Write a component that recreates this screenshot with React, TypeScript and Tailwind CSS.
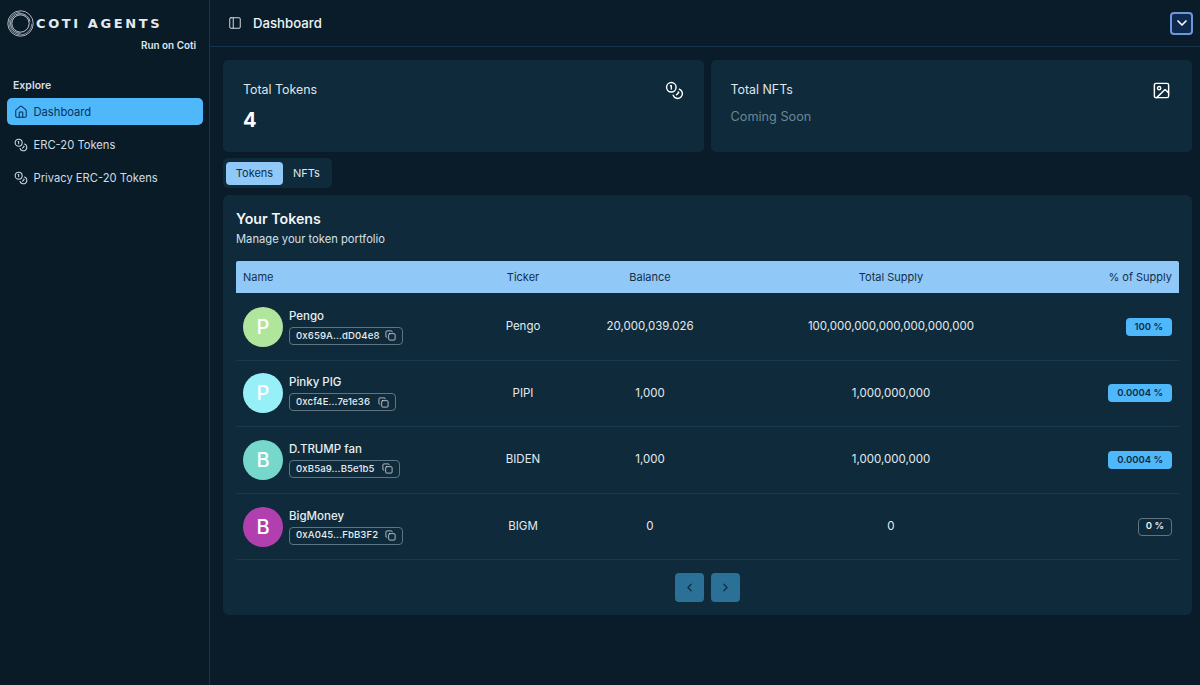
import { Coins, House, PanelLeft, Image as ImageIcon, ChevronDown, ChevronLeft, ChevronRight, Copy } from "lucide-react";

const tokens = [
  { letter: "P", color: "bg-[#b0e59c]", name: "Pengo", addr: "0x659A...dD04e8", w: "w-[114px]", ticker: "Pengo", balance: "20,000,039.026", supply: "100,000,000,000,000,000,000", pct: "100 %", filled: true },
  { letter: "P", color: "bg-[#97f0f8]", name: "Pinky PIG", addr: "0xcf4E...7e1e36", w: "w-[107px]", ticker: "PIPI", balance: "1,000", supply: "1,000,000,000", pct: "0.0004 %", filled: true },
  { letter: "B", color: "bg-[#75d8cb]", name: "D.TRUMP fan", addr: "0xB5a9...B5e1b5", w: "w-[111px]", ticker: "BIDEN", balance: "1,000", supply: "1,000,000,000", pct: "0.0004 %", filled: true },
  { letter: "B", color: "bg-[#b23fae]", name: "BigMoney", addr: "0xA045...FbB3F2", w: "w-[114px]", ticker: "BIGM", balance: "0", supply: "0", pct: "0 %", filled: false },
];

const cols = "grid grid-cols-[241px_92px_162px_320px_128px] items-center";

function NavItem({ label, active, icon }: { label: string; active?: boolean; icon: React.ReactNode }) {
  return (
    <div className={`flex h-[27px] items-center gap-[6px] rounded-[5px] pl-[6.5px] pt-[1px] text-[11.2px] ${active ? "bg-[#4fb8fa] text-[#07335a]" : "text-[#cfdbe3]"}`}>
      {icon}
      <span>{label}</span>
    </div>
  );
}

function Logo() {
  return (
    <svg width="27" height="27" viewBox="0 0 28 28" fill="none" stroke="#d8e0e6" className="shrink-0">
      <circle cx="14" cy="14" r="13.2" strokeWidth="0.8" />
      <path d="M14 2.2a11.8 11.8 0 1 0 11.8 11.8" strokeWidth="0.6" />
      <path d="M24 12A10.3 10.3 0 1 0 14 24.3" strokeWidth="0.8" />
      <circle cx="14" cy="14" r="9" strokeWidth="0.9" />
    </svg>
  );
}

export default function App() {
  return (
    <div className="flex h-[685px] w-[1200px] overflow-hidden bg-[#0a1c29] font-['Inter',sans-serif] text-[#e6edf2]">
      <aside className="flex w-[210px] shrink-0 flex-col border-r border-[#17344a] bg-[#0a1b28] pl-[7px] pr-[6px]">
        <div className="flex h-[40px] items-center pt-[6px]">
          <Logo />
          <span className="ml-[2px] whitespace-nowrap font-['DejaVu_Sans',sans-serif] text-[13px] font-bold leading-none tracking-[2.6px] text-[#e4eaee]">COTI AGENTS</span>
        </div>
        <div className="mt-[-1px] pr-[7px] text-right text-[9.9px] font-semibold leading-[12px] text-[#dfe7ec]">Run on Coti</div>
        <div className="mt-[28px] pl-[6px] text-[10.5px] font-semibold leading-[14px] text-[#d5dfe6]">Explore</div>
        <div className="mt-[5px] flex flex-col gap-[6px]">
          <NavItem active label="Dashboard" icon={<House size={14} strokeWidth={1.8} />} />
          <NavItem label="ERC-20 Tokens" icon={<Coins size={14} strokeWidth={1.8} />} />
          <NavItem label="Privacy ERC-20 Tokens" icon={<Coins size={14} strokeWidth={1.8} />} />
        </div>
      </aside>

      <main className="flex min-w-0 flex-1 flex-col">
        <header className="flex h-[47px] shrink-0 items-center border-b border-[#17344a] pl-[18px] pr-[7px]">
          <PanelLeft size={14} strokeWidth={1.6} className="text-[#dfe7ec]" />
          <span className="ml-[11px] pt-[2px] text-[13.2px] font-medium text-[#eef3f6]">Dashboard</span>
          <button className="ml-auto flex h-[23px] w-[23px] items-center justify-center rounded-[4px] border-2 border-[#6f97d8] bg-[#0e2850] text-white">
            <ChevronDown size={16} strokeWidth={2.5} />
          </button>
        </header>

        <div className="flex flex-col pl-[13px] pr-[8px] pt-[13px]">
          <div className="flex gap-[7px]">
            <section className="flex h-[92px] w-[481px] items-start justify-between rounded-[5px] bg-[#0f2a3a] pl-[20px] pr-[20px] pt-[21px]">
              <div>
                <div className="text-[12.4px] leading-[18px] text-[#dfe7ec]">Total Tokens</div>
                <div className="mt-[8px] text-[20px] font-bold leading-[26px] text-white">4</div>
              </div>
              <Coins size={19} strokeWidth={1.8} className="text-white" />
            </section>
            <section className="flex h-[92px] flex-1 items-start justify-between rounded-[5px] bg-[#0f2a3a] pl-[19.5px] pr-[21px] pt-[21px]">
              <div>
                <div className="text-[12.4px] leading-[18px] text-[#dfe7ec]">Total NFTs</div>
                <div className="mt-[9px] text-[12.7px] leading-[18px] text-[#6d8594]">Coming Soon</div>
              </div>
              <ImageIcon size={19} strokeWidth={1.8} className="text-white" />
            </section>
          </div>

          <div className="mt-[6px] flex h-[30px] w-[109px] items-center gap-[1px] rounded-[5px] bg-[#0f2a3a] px-[3px]">
            <div className="flex h-[23px] w-[57px] items-center justify-center rounded-[4px] bg-[#90c8f8] pt-[1px] text-[11px] text-[#0f2f47]">Tokens</div>
            <div className="flex h-[23px] w-[45px] items-center justify-center pt-[1px] text-[11px] text-[#dfe7ec]">NFTs</div>
          </div>

          <section className="mt-[7px] h-[420px] rounded-[6px] bg-[#0f2a3a] px-[13px] pt-[15px]">
            <h2 className="text-[14.2px] font-semibold leading-[18px] text-[#f1f5f7]">Your Tokens</h2>
            <p className="mt-[4px] text-[11.2px] leading-[15px] text-[#d5e0e7]">Manage your token portfolio</p>

            <div className="mt-[14px] border-b border-[#0f2a3a]">
              <div className={`${cols} h-[32px] rounded-t-[2px] bg-[#90c8f8] text-[11px] text-[#143049]`}>
                <div className="pl-[7px]">Name</div>
                <div className="text-center">Ticker</div>
                <div className="text-center">Balance</div>
                <div className="text-center">Total Supply</div>
                <div className="pr-[7px] text-right">% of Supply</div>
              </div>
            </div>

            {tokens.map((t) => (
              <div key={t.addr} className={`${cols} h-[66.6px] border-b border-[#183a50] text-[11.5px] text-[#e3eaef]`}>
                <div className="flex items-center pl-[7px]">
                  <div className={`flex h-[40px] w-[40px] shrink-0 items-center justify-center rounded-full text-[20px] font-medium text-white ${t.color}`}>{t.letter}</div>
                  <div className="ml-[6px]">
                    <div className="text-[11.5px] font-medium leading-[14px] text-[#e8eef2]">{t.name}</div>
                    <div className={`mt-[4px] flex h-[18px] items-center justify-between rounded-[4px] border border-[#5c7686] pl-[6px] pr-[6px] text-[9.6px] font-medium tracking-[0.1px] text-[#e6edf2] ${t.w}`}>
                      <span>{t.addr}</span>
                      <Copy size={11} strokeWidth={1.6} />
                    </div>
                  </div>
                </div>
                <div className="text-center">{t.ticker}</div>
                <div className="text-center">{t.balance}</div>
                <div className="text-center">{t.supply}</div>
                <div className="flex justify-end pr-[7px]">
                  <span className={`flex h-[18px] items-center rounded-[4px] text-[9.5px] font-semibold ${t.filled ? "bg-[#4fb8fa] px-[9px] text-[#0c2c45]" : "border border-[#5c7686] px-[7px] text-[#e6edf2]"}`}>{t.pct}</span>
                </div>
              </div>
            ))}

            <div className="mt-[13px] flex justify-center gap-[7px]">
              <button className="flex h-[29px] w-[29px] items-center justify-center rounded-[4px] bg-[#2b7097] text-[#0c2c45]"><ChevronLeft size={13} strokeWidth={2.2} /></button>
              <button className="flex h-[29px] w-[29px] items-center justify-center rounded-[4px] bg-[#2b7097] text-[#0c2c45]"><ChevronRight size={13} strokeWidth={2.2} /></button>
            </div>
          </section>
        </div>
      </main>
    </div>
  );
}
